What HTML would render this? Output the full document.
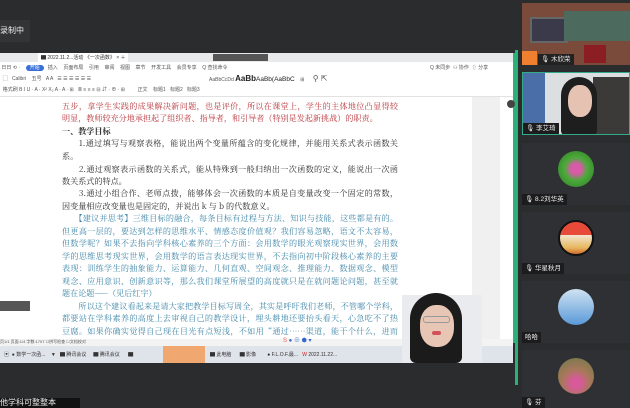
<!DOCTYPE html><html><head><meta charset="utf-8"><style>
*{margin:0;padding:0;box-sizing:border-box}
body{width:630px;height:408px;overflow:hidden;background:#2b2c2e;position:relative;font-family:"Liberation Sans","Noto Serif CJK SC","Noto Sans CJK SC",serif}
.a{position:absolute}
.l{position:absolute;left:62px;width:336px;font-size:8.1px;line-height:12px;white-space:nowrap;overflow:hidden;text-align:justify;text-align-last:justify;text-justify:inter-character;font-family:"Noto Serif CJK SC",serif}
.r{color:#b8353b}.b{color:#2b2b2b}.c{color:#3f86a8}
.ui{font-family:"Liberation Sans","Noto Sans CJK SC",sans-serif;font-size:5px;color:#555;white-space:nowrap}
.tile{position:absolute;left:522px;width:108px;background:#2f3033;overflow:hidden}
.name{position:absolute;left:0;bottom:0;height:11px;background:#1c1c1e;color:#eee;font-size:6.5px;line-height:11px;padding:0 3px;white-space:nowrap;font-family:"Liberation Sans","Noto Sans CJK SC",sans-serif}
.av{position:absolute;left:36px;top:8px;width:36px;height:36px;border-radius:50%}
</style></head><body>
<div class="a" style="left:0;top:20px;width:30px;height:22px;background:#333436;color:#eee;font-size:8px;line-height:22px;font-family:'Noto Sans CJK SC',sans-serif">录制中</div>
<div class="a" style="left:0;top:53px;width:515px;height:290px;background:#fff;border-right:2px solid #2bb07a"></div>
<div class="a" style="left:0;top:53px;width:513px;height:9px;background:#e8e9eb"></div>
<div class="a" style="left:38px;top:53px;width:90px;height:9px;background:#fff"></div>
<div class="a ui" style="left:41px;top:54px;color:#333">▇ 2022.11.2...活动 《一次函数》 × ＋</div>
<div class="a" style="left:213px;top:54px;width:55px;height:7px;background:#555"></div>
<div class="a ui" style="left:0;top:64px">&nbsp;日日 ⟲ · &nbsp;&nbsp;&nbsp;<span style="background:#3a6fd8;color:#fff;border-radius:4px;padding:0 4px">开始</span>&nbsp;&nbsp; 插入 &nbsp;&nbsp; 页面布局 &nbsp;&nbsp; 引用 &nbsp;&nbsp; 审阅 &nbsp;&nbsp; 视图 &nbsp;&nbsp; 章节 &nbsp;&nbsp; 开发工具 &nbsp;&nbsp; 会员专享 &nbsp;&nbsp; Q 查找命令</div>
<div class="a ui" style="left:430px;top:64px">Q 未同步 &nbsp;⚇ 协作 &nbsp;⇧ 分享</div>
<div class="a ui" style="left:0;top:75px">&nbsp;&nbsp;▢ &nbsp; Calibri &nbsp;&nbsp; 五号 &nbsp; A A &nbsp; ☰ ☰ ☰ ☰ ☰ ☰</div>
<div class="a ui" style="left:209px;top:74px">AaBbCcDd <b style="font-size:8px;color:#222">AaBb</b><span style="font-size:6.5px;color:#222">AaBb(AaBbC</span> &nbsp;&nbsp; ⊞ &nbsp;&nbsp;&nbsp;&nbsp; <span style="font-size:8px">⚲ ⇱</span></div>
<div class="a ui" style="left:0;top:86px">&nbsp;&nbsp;格式刷 B I U · A · X² X₂ A · A · ⊞ &nbsp; ≣ ≡ ≡ ≡ ⊟ ⇵ · ⊕ · ⊞ &nbsp;&nbsp;&nbsp;&nbsp;&nbsp;&nbsp;&nbsp; 正文 &nbsp;&nbsp; 标题1 &nbsp; 标题2 &nbsp; 标题3</div>
<div class="a" style="left:0;top:96px;width:513px;height:1px;background:#e2e2e2"></div>
<div class="a" style="left:472px;top:97px;width:28px;height:245px;background:#f0f0f0"></div>
<div class="a" style="left:505px;top:97px;width:8px;height:245px;background:#fff"></div>
<div class="a" style="left:507px;top:100px;width:8px;height:8px;border-radius:4px;background:#444"></div>
<div class="a" style="left:513px;top:250px;width:2px;height:25px;background:#2bb07a"></div>
<div class="l r" style="top:101px">五步，拿学生实践的成果解决新问题，也是评价，所以在课堂上，学生的主体地位凸显得较</div>
<div class="l r" style="top:113px;text-align-last:left">明显，教师较充分地承担起了组织者、指导者，和引导者（特别是发起新挑战）的职责。</div>
<div class="l b" style="top:126px;text-align-last:left;font-weight:bold">一、教学目标</div>
<div class="l b" style="top:138px">　　1.通过填写与观察表格，能说出两个变量所蕴含的变化规律，并能用关系式表示函数关</div>
<div class="l b" style="top:151px;text-align-last:left">系。</div>
<div class="l b" style="top:164px">　　2.通过观察表示函数的关系式，能从特殊到一般归纳出一次函数的定义，能说出一次函</div>
<div class="l b" style="top:176px;text-align-last:left">数关系式的特点。</div>
<div class="l b" style="top:188px">　　3.通过小组合作、老师点拨，能够体会一次函数的本质是自变量改变一个固定的常数，</div>
<div class="l b" style="top:201px;text-align-last:left">因变量相应改变量也是固定的，并说出 k 与 b 的代数意义。</div>
<div class="l c" style="top:213px">　　【建议并思考】三维目标的融合，每条目标有过程与方法、知识与技能，这些都是有的。</div>
<div class="l c" style="top:226px">但更高一层的，要达到怎样的思维水平、情感态度价值观？我们容易忽略，语文不太容易，</div>
<div class="l c" style="top:238px">但数学呢？如果不去指向学科核心素养的三个方面：会用数学的眼光观察现实世界，会用数</div>
<div class="l c" style="top:251px">学的思维思考现实世界，会用数学的语言表达现实世界，不去指向初中阶段核心素养的主要</div>
<div class="l c" style="top:263px">表现：训练学生的抽象能力、运算能力、几何直观、空间观念、推理能力、数据观念、模型</div>
<div class="l c" style="top:276px">观念、应用意识、创新意识等，那么我们课堂所展望的高度就只是在就问题论问题，甚至就</div>
<div class="l c" style="top:288px;text-align-last:left">题在论题——（见后红字）</div>
<div class="l c" style="top:301px">　　所以这个建议看起来是请大家把教学目标写周全，其实是呼吁我们老师，不管哪个学科，</div>
<div class="l c" style="top:313px">都要站在学科素养的高度上去审视自己的教学设计，埋头耕地还要抬头看天，心急吃不了热</div>
<div class="l c" style="top:326px">豆腐。如果你确实觉得自己现在目光有点短浅，不如用“通过……渠道，能干个什么，进而</div>
<div class="a" style="left:0;top:301px;width:30px;height:10px;background:#555"></div>
<div class="a ui" style="left:0;top:339px;width:513px;height:7px;background:#f3f3f3;font-size:4px">页1/1 页面:1/4 字数:1707 ☐拼写检查 ☐文档校对</div>
<div class="a" style="left:0;top:346px;width:513px;height:17px;background:#dfe3ea"></div>
<div class="a" style="left:163px;top:346px;width:42px;height:17px;background:#f0a870"></div>
<div class="a ui" style="left:4px;top:351px;color:#333">▣ &nbsp;● 数学一次函... &nbsp;&nbsp;&nbsp;▼ &nbsp;&nbsp;▇ 腾讯会议 &nbsp;&nbsp;&nbsp;&nbsp;▇ 腾讯会议 &nbsp;&nbsp;&nbsp;&nbsp;&nbsp;▇</div>
<div class="a ui" style="left:210px;top:351px;color:#333">▇ 此电脑 &nbsp;&nbsp;&nbsp;&nbsp;&nbsp;▇ 影像 &nbsp;&nbsp;&nbsp;&nbsp;&nbsp;&nbsp;&nbsp;● F.L.O.F.最... &nbsp;&nbsp;<span style="color:#c22">W</span> 2022.11.22...</div>
<div class="a" style="left:283px;top:335px;width:50px;height:9px;color:#e55;font-size:6px">S <span style="color:#36c">● ⊕ ⬢ ▾</span></div>
<div class="a" style="left:402px;top:295px;width:80px;height:68px;background:#e9ebee"></div>
<div class="a" style="left:410px;top:293px;width:52px;height:70px;border-radius:26px 26px 6px 6px;background:#1b1b1b"></div>
<div class="a" style="left:420px;top:305px;width:34px;height:42px;border-radius:45%;background:#e8c6b6"></div>
<div class="a" style="left:432px;top:331px;width:9px;height:4px;border-radius:3px;background:#d2505a"></div>
<div class="a" style="left:423px;top:316px;width:27px;height:7px;border:1px solid #999;border-radius:3px"></div>
<div class="a" style="left:0;top:398px;width:80px;height:10px;background:#111;color:#eee;font-size:8px;line-height:10px;font-family:'Noto Sans CJK SC',sans-serif;white-space:nowrap;overflow:hidden">他学科可整整本</div>
<div class="tile" style="top:3px;height:62px;background:#7a4a3a">
 <div class="a" style="left:8px;top:14px;width:38px;height:26px;background:#3a3a4a;border:2px solid #666"></div>
 <div class="a" style="left:42px;top:8px;width:66px;height:30px;background:#4c6a5e"></div>
 <div class="a" style="left:62px;top:42px;width:22px;height:18px;background:#8a1e22"></div>
 <div class="a" style="left:0;top:48px;width:15px;height:14px;background:#f08030"></div>
 <div class="name" style="left:16px;background:#222">🎙 木欣荣</div>
</div>
<div class="tile" style="top:72px;height:63px;background:#dcdfe2;border:1px solid #3a8">
 <div class="a" style="left:0;top:0;width:22px;height:62px;background:#4a6fa8"></div>
 <div class="a" style="left:70px;top:4px;width:38px;height:58px;background:#3b3a38"></div>
 <div class="a" style="left:38px;top:4px;width:36px;height:58px;border-radius:18px 18px 4px 4px;background:#1e1e1e"></div>
 <div class="a" style="left:45px;top:12px;width:24px;height:32px;border-radius:45%;background:#e6c2b2"></div>
 <div class="name">🎙 李艾琦</div>
</div>
<div class="tile" style="top:143px;height:62px"><div class="av" style="background:radial-gradient(circle,#d85aa8 20%,#4caa3a 45%,#2d7a28)"></div><div class="name">🎙 8.2刘华英</div></div>
<div class="tile" style="top:212px;height:62px"><div class="av" style="background:linear-gradient(#e84a3a 40%,#f2e6d2 40%,#e8b860 80%,#d06a2a);border:2px solid #111"></div><div class="name">🎙 华星秋月</div></div>
<div class="tile" style="top:281px;height:62px"><div class="av" style="background:linear-gradient(#cfe2f2,#5a9ad8)"></div><div class="name">哈哈</div></div>
<div class="tile" style="top:350px;height:58px"><div class="av" style="background:radial-gradient(circle at 50% 70%,#d85a9a 15%,#a8785a 45%,#6a7a4a)"></div><div class="name">🎙 芬</div></div>
<div class="a" style="left:515px;top:50px;width:3px;height:335px;background:#2bb07a"></div>
</body></html>
